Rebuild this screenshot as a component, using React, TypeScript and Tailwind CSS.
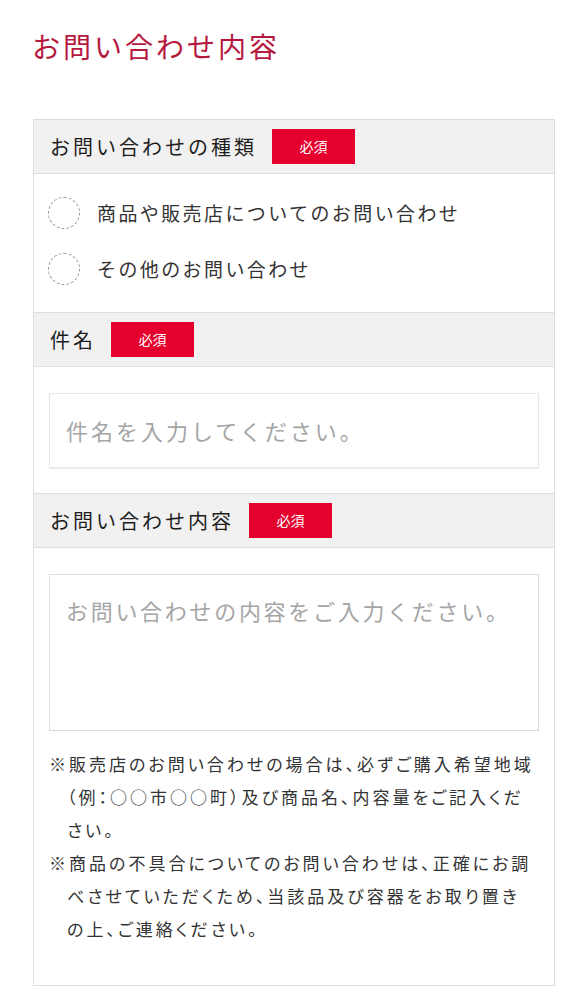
import React from "react";

// ── Form section header ───────────────────────────────────────────────────────

function SectionHeader({ label }: { label: string }) {
  return (
    <div className="flex items-center h-[54px] bg-[#f1f1f1] border-b border-[#dedede] pl-[16px]">
      <span className="text-[20px] tracking-[3px] text-[#1e1e1e]">{label}</span>
      <span className="ml-[15px] flex items-center justify-center w-[83px] h-[35px] bg-[#e5002d] text-white text-[14px]">
        必須
      </span>
    </div>
  );
}

function RadioRow({ label }: { label: string }) {
  return (
    <label className="flex items-center gap-[17px]">
      <span className="w-[32px] h-[32px] rounded-full border border-dashed border-[#9a9a9a] shrink-0" />
      <span className="text-[19px] tracking-[2.4px] text-[#333]">{label}</span>
    </label>
  );
}

export default function App() {
  return (
    <div
      className="min-h-screen bg-white pt-[26px] pb-[22px]"
      style={{ fontFamily: "'Noto Sans CJK JP', 'Noto Sans', sans-serif" }}
    >
      <h1 className="pl-[32px] text-[28px] leading-[40px] tracking-[3px] text-[#b5193f] font-normal">
        お問い合わせ内容
      </h1>

      <div className="mt-[53px] ml-[33px] w-[522px] border border-[#dcdcdc]">
        {/* 種類 */}
        <SectionHeader label="お問い合わせの種類" />
        <div className="flex flex-col gap-[24px] pl-[14px] pt-[23px] pb-[27px] border-b border-[#dedede]">
          <RadioRow label="商品や販売店についてのお問い合わせ" />
          <RadioRow label="その他のお問い合わせ" />
        </div>

        {/* 件名 */}
        <SectionHeader label="件名" />
        <div className="px-[15px] pt-[26px] pb-[25px] border-b border-[#dedede]">
          <div className="h-[75px] w-[490px] border border-[#e8e8e8] shadow-[0_1px_1px_rgba(0,0,0,0.06)] flex items-center pl-[16px] text-[22px] tracking-[3px] text-[#a5a5a5]">
            件名を入力してください。
          </div>
        </div>

        {/* 内容 */}
        <SectionHeader label="お問い合わせ内容" />
        <div className="px-[15px] pt-[26px] pb-[40px]">
          <div className="h-[157px] w-[490px] border border-[#dcdcdc] pl-[16px] pt-[18px] text-[22px] leading-[34px] tracking-[2.7px] text-[#a5a5a5]">
            お問い合わせの内容をご入力ください。
          </div>
          <div className="mt-[16px] text-[17px] leading-[33px] tracking-[3px] text-[#333] [font-feature-settings:'palt']">
            <p className="pl-[18px] -indent-[18px] whitespace-nowrap">
              ※販売店のお問い合わせの場合は、必ずご購入希望地域
              <br />
              （例：○○市○○町）及び商品名、内容量をご記入くだ
              <br />
              さい。
            </p>
            <p className="pl-[18px] -indent-[18px] whitespace-nowrap">
              ※商品の不具合についてのお問い合わせは、正確にお調
              <br />
              べさせていただくため、当該品及び容器をお取り置き
              <br />
              の上、ご連絡ください。
            </p>
          </div>
        </div>
      </div>
    </div>
  );
}
